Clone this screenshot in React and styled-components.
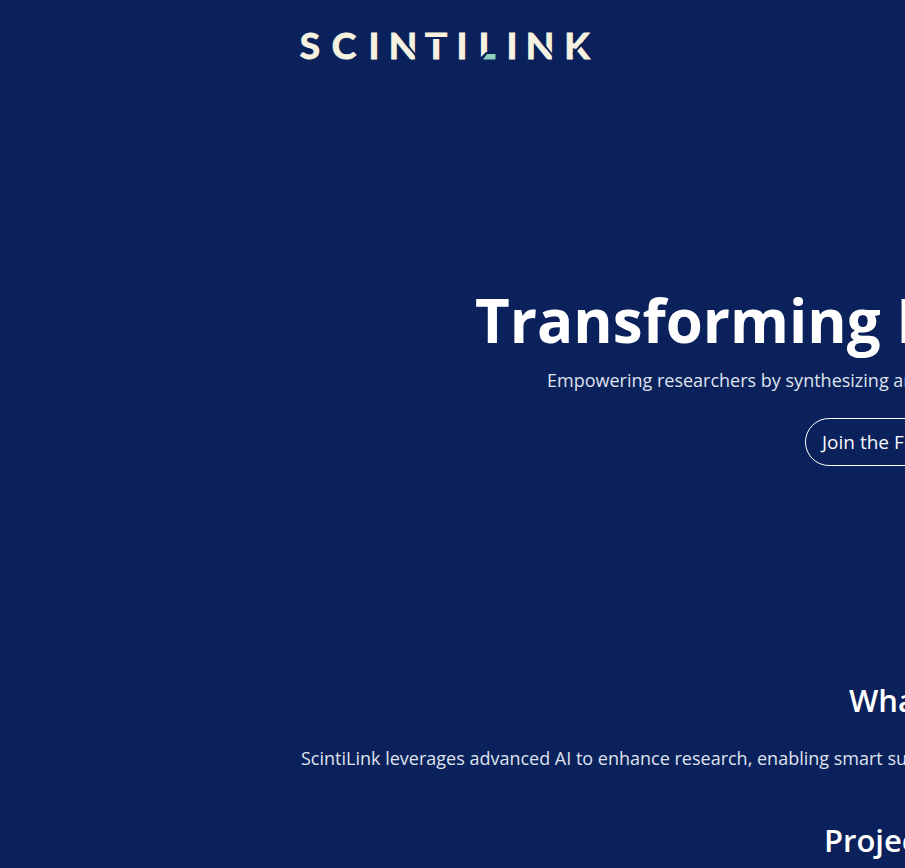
import React from "react";
import styled, { createGlobalStyle } from "styled-components";

const navy = "#0b215b";
const cream = "#f7f2e0";

const GlobalStyle = createGlobalStyle`
  *, *::before, *::after { box-sizing: border-box; }
  body {
    margin: 0;
    background: ${navy};
    color: #fff;
    font-family: "Segoe UI", "Open Sans", "Noto Sans", sans-serif;
    overflow: hidden;
  }
`;

const Page = styled.div`
  min-height: 100vh;
  overflow: hidden;
  white-space: nowrap;
`;

const Header = styled.header`
  padding: 24px 0 0 296px;
`;

const LogoLink = styled.a`
  display: block;
  width: 296px;
`;

const LogoSvg = styled.svg`
  display: block;
  width: 100%;
  height: auto;
`;

const LogoText = styled.text`
  font-family: Lato, sans-serif;
  font-weight: 700;
  font-size: 37px;
  text-anchor: middle;
  fill: ${cream};
  stroke: ${cream};
  stroke-width: 1;
`;

const Hero = styled.section`
  display: flex;
  flex-direction: column;
  align-items: flex-start;
  padding-top: 212px;
`;

const Title = styled.h1`
  margin: 0 0 4px;
  padding-left: 475px;
  font-size: 60px;
  line-height: 80px;
  font-weight: 700;
`;

const Text = styled.p`
  margin: 0;
  padding-left: ${(p) => p.$indent}px;
  font-size: 18px;
  line-height: 32px;
  font-weight: 400;
  color: #dfe3ee;
`;

const JoinButton = styled.button`
  margin: 22px 0 0 805px;
  height: 48px;
  padding: 0 16px;
  border: 1px solid #fff;
  border-radius: 24px;
  background: transparent;
  color: #f8f9fa;
  font: 400 19px/24px "Segoe UI", "Open Sans", "Noto Sans", sans-serif;
`;

const About = styled.main`
  padding-top: 212px;
`;

const Heading = styled.h2`
  margin: 0;
  padding-left: ${(p) => p.$indent}px;
  font-size: 31px;
  line-height: 44px;
  font-weight: 600;
`;

const Block = styled.section`
  display: flex;
  flex-direction: column;
  gap: 20px;
  padding-bottom: 44px;
`;

function Logo() {
  return (
    <LogoSvg viewBox="296 24 296 44" role="img" aria-label="ScintiLink">
      <LogoText x="310 344 374 403 436 462 488 512 540 577" y="59">SCINTILINK</LogoText>
      <g stroke={navy} strokeWidth="2" fill="none">
        <path d="M424 38H449" />
        <path d="M405 42L417 57" />
        <path d="M542 42L554 57" />
        <path d="M573 54L582 44" />
      </g>
      <path d="M478 62V57H481L486 52H500V62Z" fill={navy} />
      <path d="M487 54H495.500V59.500H483Z" fill="#8fd0bd" />
    </LogoSvg>
  );
}

export default function App() {
  return (
    <>
      <GlobalStyle />
      <Page>
        <Header>
          <LogoLink href="#home"><Logo /></LogoLink>
        </Header>
        <Hero>
          <Title>Transforming Research</Title>
          <Text $indent={547}>Empowering researchers by synthesizing and</Text>
          <JoinButton type="button">Join the Future</JoinButton>
        </Hero>
        <About>
          <Block>
            <Heading $indent={849}>What</Heading>
            <Text $indent={301}>ScintiLink leverages advanced AI to enhance research, enabling smart summaries</Text>
          </Block>
          <Block>
            <Heading $indent={824}>Project</Heading>
          </Block>
        </About>
      </Page>
    </>
  );
}
